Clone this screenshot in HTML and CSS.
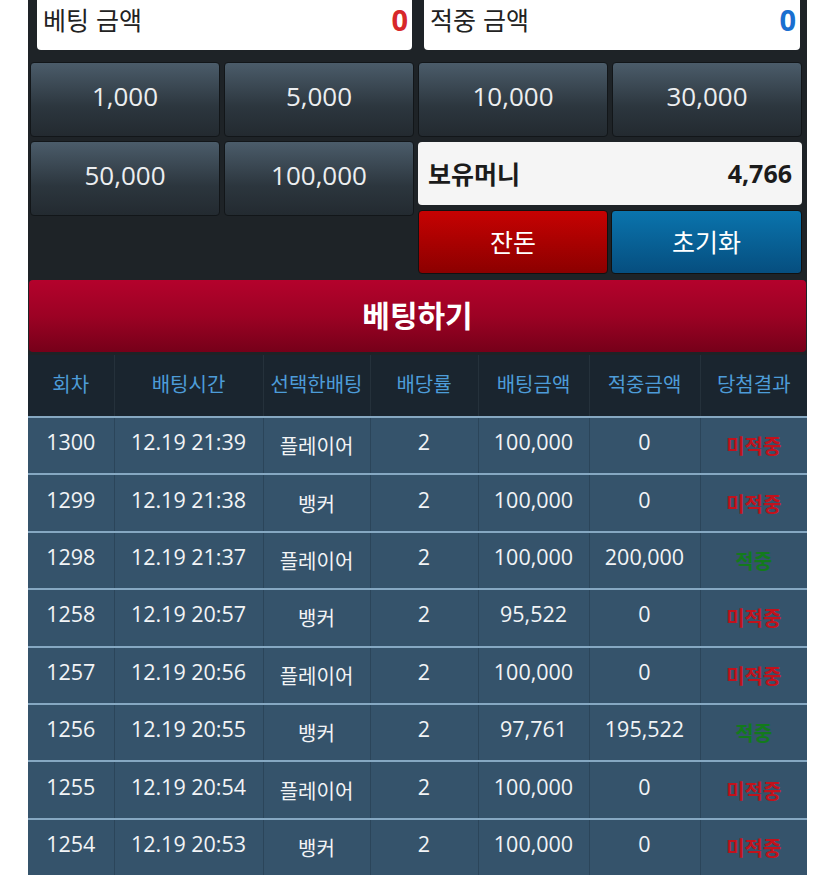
FILE: index.html
```html
<!DOCTYPE html>
<html lang="ko">
<head>
<meta charset="utf-8">
<link rel="stylesheet" href="styles.css">
</head>
<body>
<div class="wrap">
  <div class="panel">
    <div class="sums">
      <div class="sum"><span class="sum-label">베팅 금액</span><span class="sum-val red">0</span></div>
      <div class="sum"><span class="sum-label">적중 금액</span><span class="sum-val blue">0</span></div>
    </div>
    <div class="chips">
      <div class="chip">1,000</div>
      <div class="chip">5,000</div>
      <div class="chip">10,000</div>
      <div class="chip">30,000</div>
    </div>
    <div class="lower">
      <div class="chip">50,000</div>
      <div class="chip">100,000</div>
      <div class="right">
        <div class="money"><span>보유머니</span><span>4,766</span></div>
        <div class="act act-red">잔돈</div>
        <div class="act act-blue">초기화</div>
      </div>
    </div>
    <div class="bet">베팅하기</div>
  </div>
  <table class="hist">
    <thead>
      <tr><th>회차</th><th>배팅시간</th><th>선택한배팅</th><th>배당률</th><th>배팅금액</th><th>적중금액</th><th>당첨결과</th></tr>
    </thead>
    <tbody>
      <tr><td>1300</td><td>12.19 21:39</td><td class="ko">플레이어</td><td>2</td><td>100,000</td><td>0</td><td class="res lose">미적중</td></tr>
      <tr><td>1299</td><td>12.19 21:38</td><td class="ko">뱅커</td><td>2</td><td>100,000</td><td>0</td><td class="res lose">미적중</td></tr>
      <tr><td>1298</td><td>12.19 21:37</td><td class="ko">플레이어</td><td>2</td><td>100,000</td><td>200,000</td><td class="res win">적중</td></tr>
      <tr><td>1258</td><td>12.19 20:57</td><td class="ko">뱅커</td><td>2</td><td>95,522</td><td>0</td><td class="res lose">미적중</td></tr>
      <tr><td>1257</td><td>12.19 20:56</td><td class="ko">플레이어</td><td>2</td><td>100,000</td><td>0</td><td class="res lose">미적중</td></tr>
      <tr><td>1256</td><td>12.19 20:55</td><td class="ko">뱅커</td><td>2</td><td>97,761</td><td>195,522</td><td class="res win">적중</td></tr>
      <tr><td>1255</td><td>12.19 20:54</td><td class="ko">플레이어</td><td>2</td><td>100,000</td><td>0</td><td class="res lose">미적중</td></tr>
      <tr><td>1254</td><td>12.19 20:53</td><td class="ko">뱅커</td><td>2</td><td>100,000</td><td>0</td><td class="res lose">미적중</td></tr>
    </tbody>
  </table>
</div>
</body>
</html>
```
FILE: styles.css
```css
* { box-sizing: border-box; }
html, body { margin: 0; padding: 0; background: #fff; }
body {
  font-family: "Open Sans", "Noto Sans CJK KR", sans-serif;
  overflow: hidden;
  height: 875px;
}
.wrap {
  margin-left: 28px;
  width: 779px;
  background: #1e2327;
}
.panel {
  padding: 0 1px 2px 1px;
}
.sums {
  display: grid;
  grid-template-columns: 375px 376px;
  column-gap: 12px;
  padding: 0 0 0 8px;
  height: 62px;
}
.sum {
  background: #fff;
  height: 50px;
  border-radius: 0 0 4px 4px;
  display: flex;
  justify-content: space-between;
  align-items: center;
  padding: 0 4px 12px 6px;
}
.sum-label {
  font-family: "Noto Sans CJK KR", sans-serif;
  font-size: 25px;
  color: #222;
}
.sum-val {
  font-size: 29px;
  font-weight: 700;
}
.red { color: #d7282a; }
.blue { color: #1a6fd0; }
.chips, .lower {
  display: grid;
  grid-template-columns: repeat(4, 190px);
  column-gap: 4px;
  padding-left: 1px;
}
.lower { margin-top: 4px; }
.chip {
  height: 75px;
  border-radius: 4px;
  border: 1px solid #121619;
  background: linear-gradient(#4b5c6a, #2c363e 60%, #232a30);
  color: #eceef0;
  font-size: 26px;
  display: flex;
  align-items: center;
  justify-content: center;
  padding-bottom: 7px;
}
.right {
  grid-column: 3 / span 2;
  display: grid;
  grid-template-columns: 190px 191px;
  column-gap: 3px;
  row-gap: 5px;
  padding-top: 1px;
}
.money {
  grid-column: 1 / span 2;
  height: 63px;
  background: #f5f5f5;
  border-radius: 4px;
  display: flex;
  justify-content: space-between;
  align-items: center;
  padding: 0 10px 2px 10px;
  font-weight: 700;
  font-size: 24px;
  color: #1b1b1b;
}
.money span:first-child { font-family: "Noto Sans CJK KR", sans-serif; font-size: 25px; }
.money span:last-child { font-size: 25px; }
.act {
  height: 64px;
  border-radius: 4px;
  color: #fff;
  font-family: "Noto Sans CJK KR", sans-serif;
  font-size: 25px;
  display: flex;
  align-items: center;
  justify-content: center;
  border: 1px solid #111;
  padding-bottom: 2px;
}
.act-red { background: linear-gradient(#c60202, #8c0000); }
.act-blue { background: linear-gradient(#0a74ad, #064e7f); }
.bet {
  margin-top: 6px;
  height: 72px;
  border-radius: 4px;
  background: linear-gradient(#b4022c, #9c0224 50%, #760019);
  color: #fff;
  font-family: "Noto Sans CJK KR", sans-serif;
  font-weight: 700;
  font-size: 30px;
  display: flex;
  align-items: center;
  justify-content: center;
  padding-bottom: 4px;
}
.hist {
  width: 779px;
  border-collapse: collapse;
  table-layout: fixed;
  margin-top: 1px;
}
.hist th:nth-child(1) { width: 86px; }
.hist th:nth-child(2) { width: 149px; }
.hist th:nth-child(3) { width: 107px; }
.hist th:nth-child(4) { width: 108px; }
.hist th:nth-child(5) { width: 111px; }
.hist th:nth-child(6) { width: 111px; }
.hist th:nth-child(7) { width: 107px; }
.hist th {
  height: 62px;
  background: #1a252f;
  color: #4d9cd8;
  font-family: "Noto Sans CJK KR", sans-serif;
  font-weight: 400;
  font-size: 20px;
  border-left: 1px solid #25313b;
  padding: 0 0 4px 0;
}
.hist th:first-child, .hist td:first-child { border-left: none; }
.hist td {
  height: 57.4px;
  background: #35536b;
  color: #f2f4f6;
  font-size: 21.5px;
  text-align: center;
  border-top: 2px solid #86a8c2;
  border-left: 1px solid #2b455a;
  padding: 0 0 8px 0;
}
.hist td.ko {
  font-family: "Noto Sans CJK KR", sans-serif;
  font-size: 20px;
  padding: 0;
}
.hist td.res {
  font-family: "Noto Sans CJK KR", sans-serif;
  font-size: 20px;
  font-weight: 700;
  padding: 0;
}
.lose { color: #c2121c !important; }
.win { color: #137a1c !important; }
```
